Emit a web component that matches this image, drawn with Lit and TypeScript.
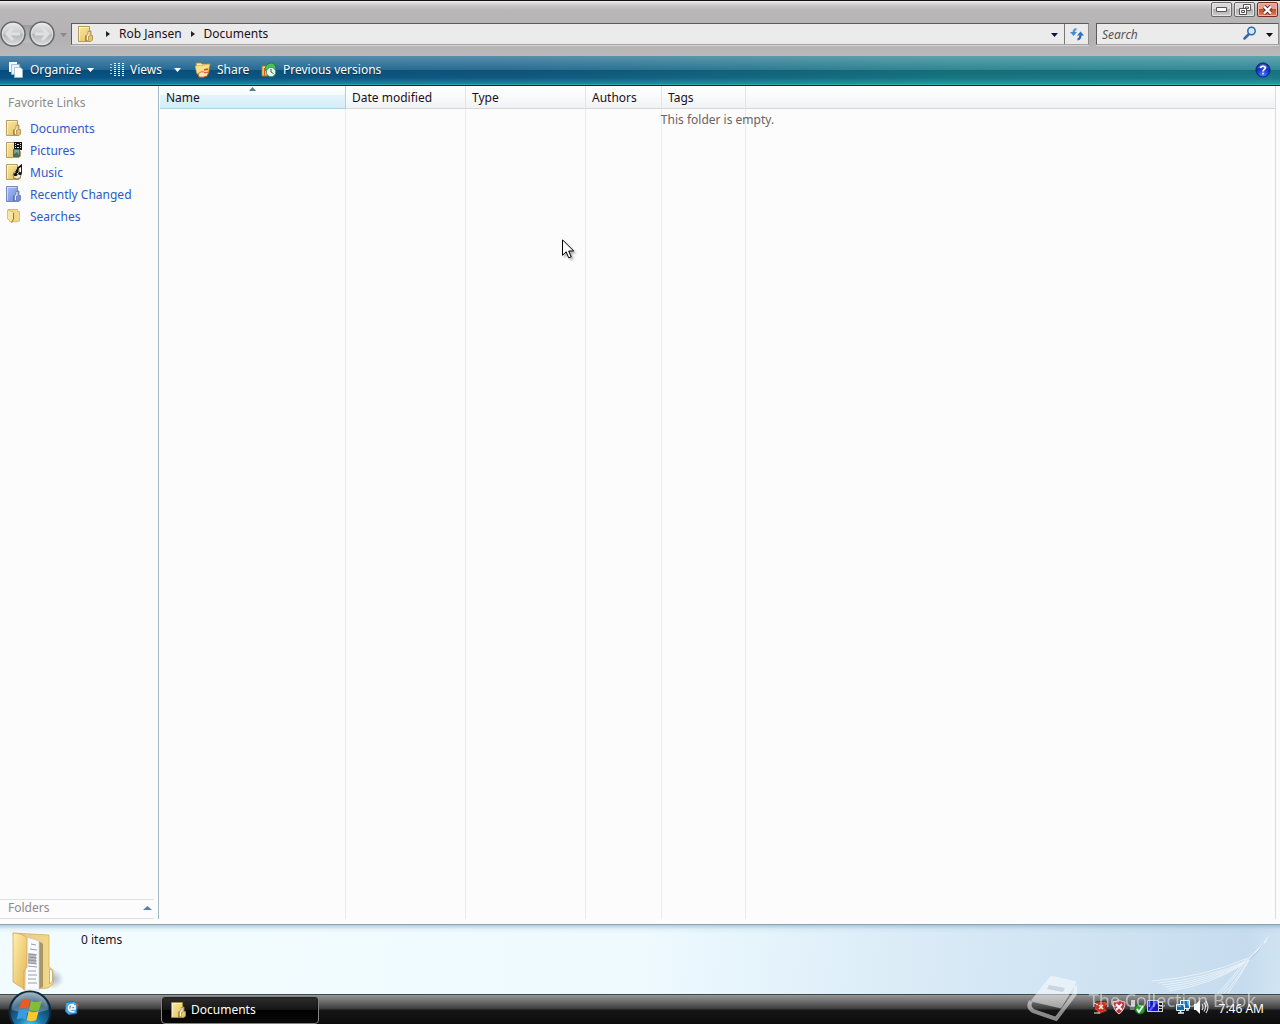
import { LitElement, html, css, svg, nothing } from "lit";
import { customElement, property } from "lit/decorators.js";

type FolderKind = "documents" | "pictures" | "music" | "recent" | "searches";

const LINKS: { label: string; kind: FolderKind }[] = [
  { label: "Documents", kind: "documents" },
  { label: "Pictures", kind: "pictures" },
  { label: "Music", kind: "music" },
  { label: "Recently Changed", kind: "recent" },
  { label: "Searches", kind: "searches" },
];

const caret = html`<svg class="caret" width="7" height="4" viewBox="0 0 7 4" aria-hidden="true"><path d="M0 0h7L3.500 4z" fill="currentColor"/></svg>`;
const chevron = html`<svg class="chevron" width="4" height="6" viewBox="0 0 4 6" aria-hidden="true"><path d="M0 0l4 3-4 3z" fill="#222"/></svg>`;

@customElement("folder-icon")
export class FolderIcon extends LitElement {
  static styles = css`
    :host { display: block; width: 16px; height: 16px; flex: none; }
    .icon { display: block; }
  `;

  @property() kind: FolderKind = "documents";

  private extra() {
    switch (this.kind) {
      case "pictures":
        return svg`<path d="M8 0h8v8H8z" fill="#111"/><path d="M9 1h1v1H9zM9 3h1v1H9zM9 5h1v1H9zM14 1h1v1h-1zM14 3h1v1h-1zM14 5h1v1h-1zM11 2h2v1h-2zM11 5h2v1h-2z" fill="#ddd"/><path d="M7.500 7.500h6v7h-6z" fill="#79a6a0" stroke="#55655d"/><path d="M8 12l3-2 2 3v1H8z" fill="#3b6f70"/>`;
      case "music":
        return svg`<circle cx="11" cy="11" r="4" fill="#eee9cf" stroke="#99895a"/><path d="M11 9l1-5 4-3v8" fill="none" stroke="#111" stroke-width="1.800"/><path d="M9 12l2-6" stroke="#111" stroke-width="1.500"/><ellipse cx="9.500" cy="10.500" rx="2" ry="1.600" fill="#111"/><ellipse cx="14" cy="9.500" rx="1.800" ry="1.500" fill="#111"/>`;
      default:
        return nothing;
    }
  }

  render() {
    const blue = this.kind === "recent";
    const light = blue ? "#a9c0f4" : "#fae9a4";
    const dark = blue ? "#6583d4" : "#e3bb57";
    const line = blue ? "#6579ad" : "#a78c4a";
    if (this.kind === "searches") {
      return html`<svg class="icon" width="16" height="16" viewBox="0 0 16 16" aria-hidden="true">
        <path d="M2 1.500h9.500v2h2v9.500l-5 1L3 11z" fill="#f3d78d" stroke="#d0b06a" stroke-width=".8"/>
        <path d="M1.500 2l6 2v7l-1 3.500-3-1v-1.500l-2-1z" fill="#fbe6a4" stroke="#d8b668" stroke-width=".8"/>
        <path d="M7.500 5v6l-2 3.500" stroke="#9b7832" fill="none"/>
      </svg>`;
    }
    return html`<svg class="icon" width="16" height="16" viewBox="0 0 16 16" aria-hidden="true">
      <defs><linearGradient id="f" x1="0" y1="0" x2="1" y2="1"><stop offset="0" stop-color=${light}/><stop offset="1" stop-color=${dark}/></linearGradient></defs>
      <path d="M.5.500h11v4.500h1.500v4.500h1.500v4.500l-1.500 1.500H.5z" fill="url(#f)" stroke=${line} stroke-width=".8"/>
      <path d="M1.500 14.500V1.500h9" fill="none" stroke="#fff" stroke-opacity=".5"/>
      <path d="M8 15v-5l2-1.500V5.500h2v4.500h-1.500v4.500z" fill=${blue ? "#e5ecfb" : "#fffbe8"} stroke=${line} stroke-width=".8"/>
      <path d="M8 9.500v5.500" stroke=${blue ? "#40558d" : "#7d6320"} stroke-width=".9"/>
      ${this.extra()}
    </svg>`;
  }
}

@customElement("window-frame")
export class WindowFrame extends LitElement {
  static styles = css`
    :host { display: block; background: linear-gradient(#111 0 1px, #f0eff0 1px, #cbc9c9 5px, #b9b7b7 10px, #b3b1b1 40px, #bbb9b9 56px); }
    button, input { font: inherit; color: inherit; margin: 0; padding: 0; border: 0; background: none; }
    .buttons { display: flex; justify-content: flex-end; gap: 2px; padding: 2px 2px 0; height: 16px; box-sizing: border-box; }
    .win { display: flex; align-items: center; justify-content: center; width: 21px; height: 15px; box-sizing: border-box; border: 1px solid #6a6868; border-radius: 2px; background: linear-gradient(#d9d8d8 0 50%, #b2b0b0 50%, #cdcbcb); box-shadow: inset 0 0 0 1px #e6e5e5; }
    .close { border-color: #7c2c1c; background: linear-gradient(#e6a08c 0 50%, #c94a2a 50%, #e0805c); box-shadow: inset 0 0 0 1px #efb7a5; }
    .row { display: flex; align-items: center; height: 40px; box-sizing: border-box; padding: 0 1px 4px 0; }
    .nav { display: flex; flex: none; align-items: center; width: 71px; height: 28px; background: linear-gradient(#9d9b9b, #bfbdbd) 14px center / 28px 18px no-repeat; }
    .round { flex: none; width: 26px; height: 26px; margin-right: 3px; }
    .recent { width: 10px; color: #8b8989; }
    .box { display: flex; align-items: center; height: 22px; box-sizing: border-box; background: #ecebeb; border: 1px solid; border-color: #5c5a5a #8e8c8c #a3a1a1 #5c5a5a; box-shadow: 0 1px #d6d4d4; }
    .address { flex: 1; padding-left: 6px; }
    .crumbs { display: flex; flex: 1; align-items: center; gap: 9px; padding-left: 12px; }
    .crumbs button { line-height: 20px; color: #1d1020; }
    .drop { width: 20px; height: 20px; color: #101040; }
    .refresh { display: flex; align-items: center; justify-content: center; width: 24px; height: 20px; border-left: 1px solid #777; }
    .search { width: 183px; margin-left: 7px; }
    .search input { flex: 1; min-width: 0; height: 20px; padding-left: 5px; font-style: italic; outline: none; }
    .search input::placeholder { color: #555; opacity: 1; }
    .find { display: flex; width: 14px; height: 16px; }
    .options { width: 18px; color: #111; margin-left: 3px; }
    svg { display: inline-block; vertical-align: middle; }
  `;

  private round(path: string) {
    return html`<svg width="26" height="26" viewBox="0 0 26 26" aria-hidden="true">
      <defs><linearGradient id="g" x1="0" y1="0" x2="0" y2="1"><stop offset="0" stop-color="#e9e9e9"/><stop offset=".48" stop-color="#c9cacb"/><stop offset=".52" stop-color="#b5b7b8"/><stop offset="1" stop-color="#dcdede"/></linearGradient></defs>
      <circle cx="13" cy="13" r="12" fill="url(#g)" stroke="#63676a" stroke-width="1.500"/>
      <circle cx="13" cy="13" r="10.500" fill="none" stroke="#f2f2f2" stroke-opacity=".6"/>
      <path d=${path} fill="none" stroke="#dfe1e1" stroke-width="3"/>
    </svg>`;
  }

  render() {
    return html`
      <div class="buttons">
        <button class="win" aria-label="Minimize"><svg width="11" height="5" viewBox="0 0 11 5"><path d="M.5.500h10v4H.5z" fill="#fff" stroke="#555"/></svg></button>
        <button class="win" aria-label="Restore"><svg width="12" height="11" viewBox="0 0 12 11"><path d="M4.500.500h7v6h-7zM6.500 3h3v1.500h-3z" fill="#fff" stroke="#555"/><path d="M.5 4.500h7v6h-7zM2.500 6.500h3v2h-3z" fill="#fff" stroke="#555"/></svg></button>
        <button class="win close" aria-label="Close"><svg width="11" height="10" viewBox="0 0 11 10"><path d="M2 1.500l7 7M9 1.500l-7 7" stroke="#54302a" stroke-width="4"/><path d="M2 1.500l7 7M9 1.500l-7 7" stroke="#fff" stroke-width="2.400"/></svg></button>
      </div>
      <div class="row">
        <div class="nav">
          <button class="round" aria-label="Back">${this.round("M20 13H8M13 7l-6 6 6 6")}</button>
          <button class="round" aria-label="Forward">${this.round("M6 13h12M13 7l6 6-6 6")}</button>
          <button class="recent" aria-label="Recent pages">${caret}</button>
        </div>
        <div class="box address">
          <folder-icon kind="documents"></folder-icon>
          <div class="crumbs">${chevron}<button>Rob Jansen</button>${chevron}<button>Documents</button></div>
          <button class="drop" aria-label="Previous locations">${caret}</button>
          <button class="refresh" aria-label="Refresh">
            <svg width="14" height="14" viewBox="0 0 14 14"><path d="M6.500 2Q3.500 2.500 3.500 6" fill="none" stroke="#4f9be0" stroke-width="2.200"/><path d="M0 5h7L3.500 9z" fill="#3f8cd6"/><path d="M7.500 12.500q3-.5 3-5" fill="none" stroke="#2b66b8" stroke-width="2.200"/><path d="M7 8.500h7l-3.500-4z" fill="#2f6fc0"/></svg>
          </button>
        </div>
        <div class="box search">
          <input type="text" placeholder="Search" aria-label="Search" />
          <button class="find" aria-label="Find"><svg width="14" height="14" viewBox="0 0 14 14"><path d="M1.500 12.500l5-5" stroke="#3a6aa2" stroke-width="2.500" stroke-linecap="round"/><circle cx="8.500" cy="5" r="3.700" fill="#cfeaf8" stroke="#2e67a8" stroke-width="1.500"/></svg></button>
          <button class="options" aria-label="Search options">${caret}</button>
        </div>
      </div>`;
  }
}

@customElement("command-bar")
export class CommandBar extends LitElement {
  static styles = css`
    :host { display: block; }
    .bar { display: flex; align-items: center; height: 30px; box-sizing: border-box; padding: 0 9px 2px 8px; color: #fff; border-bottom: 1px solid #06262c;
      background: linear-gradient(rgba(255,255,255,.3), rgba(255,255,255,.1) 48%, rgba(0,0,0,.1) 50%, rgba(0,0,0,.04) 75%, rgba(60,220,205,.3) 95%, rgba(90,230,220,.6)), linear-gradient(90deg, #07558a, #115c86 40%, #187a86 75%, #1b7d8c); }
    button { display: flex; align-items: center; gap: 6px; font: inherit; color: inherit; line-height: 20px; border: 0; padding: 0; margin: 0; background: none; white-space: nowrap; text-shadow: 0 1px 1px #06304a; }
    .organize { width: 102px; }
    .views { width: 64px; }
    .split { width: 21px; }
    .share { width: 66px; }
    .help { margin-left: auto; }
  `;

  render() {
    return html`<div class="bar" role="toolbar">
      <button class="organize"><svg width="16" height="16" viewBox="0 0 16 16"><path d="M1 0h8v10H1z" fill="#fff"/><path d="M3.500 2.500h8v10h-8z" fill="#e8f3fa" stroke="#8fb2c8" stroke-width=".8"/><path d="M6.500 5.500h6l2 2v8h-8z" fill="#fff" stroke="#9cb9ca" stroke-width=".8"/></svg>Organize${caret}</button>
      <button class="views"><svg width="14" height="14" viewBox="0 0 14 14"><path d="M0 1.500h2M0 4.500h2M0 7.500h2M0 10.500h2" stroke="#a8cfe2"/><path d="M4 .500h2M4 2.500h2M4 4.500h2M4 6.500h2M4 8.500h2M4 10.500h2M4 12.500h2M8 .500h2M8 2.500h2M8 4.500h2M8 6.500h2M8 8.500h2M8 10.500h2M8 12.500h2M12 .500h2M12 2.500h2M12 4.500h2M12 6.500h2M12 8.500h2M12 10.500h2M12 12.500h2" stroke="#fff"/></svg>Views</button>
      <button class="split" aria-label="Change view">${caret}</button>
      <button class="share"><svg width="16" height="16" viewBox="0 0 16 16"><path d="M1 1h5l1 1h7v8H2z" fill="#fff0b4" stroke="#b88420" stroke-width=".8"/><path d="M0 4l9-1 6-1-2 8-11 2z" fill="#fce08a" stroke="#d19a2c" stroke-width=".6"/><path d="M3 12q4-4 7-1l4-1-2 4q-4 2-8 1z" fill="#ffe3b4" stroke="#c25f20" stroke-width=".9"/><path d="M9 8l4-1" stroke="#e03c20" stroke-width="1.500"/></svg>Share</button>
      <button><svg width="16" height="16" viewBox="0 0 16 16"><path d="M1 4h5v10H1z" fill="#fbe38a" stroke="#a67a1c"/><path d="M3.500 6v8" stroke="#e05b20" stroke-width="1.500"/><path d="M4 7q1-6 7-6 4 1 4 7l-3-2q-4-2-7 3z" fill="#45c558" stroke="#127326" stroke-width=".7"/><circle cx="10" cy="10" r="4.700" fill="#e9f8ef" stroke="#4d976a"/><path d="M10 7v3l2.500 1.500" fill="none" stroke="#286d54"/></svg>Previous versions</button>
      <button class="help" aria-label="Help"><svg width="16" height="16" viewBox="0 0 17 17"><defs><radialGradient id="h" cx=".5" cy=".85" r=".8"><stop offset="0" stop-color="#4c7cf8"/><stop offset=".6" stop-color="#1331cb"/><stop offset="1" stop-color="#233c9f"/></radialGradient></defs><circle cx="8.500" cy="8.500" r="7.500" fill="url(#h)" stroke="#0a1c80"/><path d="M3 6q5.500-7 11 0-5 2-11 0z" fill="#fff" opacity=".25"/><path d="M6 6.500q0-2 2.500-2t2.500 2q0 1-1.500 1.700-1 .5-1 1.800M8.500 11.500v1.500" fill="none" stroke="#fff" stroke-width="1.700"/></svg></button>
    </div>`;
  }
}

@customElement("link-pane")
export class LinkPane extends LitElement {
  static styles = css`
    :host { display: flex; flex-direction: column; width: 159px; box-sizing: border-box; border-right: 1px solid #a3b8c6; }
    .title { margin: 0; padding: 8px 8px 5px; font: inherit; line-height: 18px; color: #8e8a8a; }
    .list { list-style: none; margin: 0; padding: 0; }
    .link { display: flex; align-items: center; gap: 8px; height: 22px; padding-left: 6px; color: #2b5bc2; text-decoration: none; white-space: nowrap; }
    .folders { display: flex; align-items: center; justify-content: space-between; margin: auto 4px 0 0; height: 20px; box-sizing: border-box; padding: 0 2px 3px 8px; font: inherit; color: #8e8a8a; background: none; border: solid #e2dfdf; border-width: 1px 0; }
  `;

  render() {
    return html`
      <h2 class="title">Favorite Links</h2>
      <ul class="list">
        ${LINKS.map((l) => html`<li><a class="link" href="#"><folder-icon kind=${l.kind}></folder-icon>${l.label}</a></li>`)}
      </ul>
      <button class="folders">Folders<svg width="9" height="4" viewBox="0 0 9 4"><path d="M0 4h9L4.500 0z" fill="#5c7db3"/></svg></button>`;
  }
}

@customElement("file-list")
export class FileList extends LitElement {
  static styles = css`
    :host { display: grid; flex: 1; margin: 0 4px 0 1px; border-right: 1px solid #dcdcdc; }
    .table { grid-area: 1 / 1; width: 100%; height: 100%; table-layout: fixed; border-collapse: separate; border-spacing: 0; }
    .name { width: 186px; }
    .date, .type { width: 120px; }
    .authors { width: 76px; }
    .tags { width: 84px; }
    th { position: relative; height: 23px; box-sizing: border-box; padding: 2px 0 0 6px; font-weight: normal; text-align: left; line-height: 20px; color: #1d1020; background: linear-gradient(#fff, #f9fafb 50%, #f1f2f4); border-right: 1px solid #e3e5e7; border-bottom: 1px solid #d6d8da; white-space: nowrap; }
    .sorted { background: linear-gradient(#fff 0 5%, #f4fbfe 40%, #e3f3fb 42%, #d5ecf8); border-color: #a9d2e4; }
    .mark { position: absolute; top: 1px; left: 48%; }
    td { padding: 0; height: 100%; border-right: 1px solid #ececee; }
    th:last-child, td:last-child { border-right: 0; }
    .empty { grid-area: 1 / 1; justify-self: center; align-self: start; margin: 25px 0 0; line-height: 18px; color: #6c6166; z-index: 1; }
  `;

  render() {
    return html`
      <table class="table">
        <colgroup><col class="name"><col class="date"><col class="type"><col class="authors"><col class="tags"><col></colgroup>
        <thead><tr>
          <th class="sorted" aria-sort="ascending">Name<svg class="mark" width="7" height="4" viewBox="0 0 7 4"><path d="M0 4h7L3.500 0z" fill="#4d8494"/></svg></th>
          <th>Date modified</th><th>Type</th><th>Authors</th><th>Tags</th><th></th>
        </tr></thead>
        <tbody><tr><td></td><td></td><td></td><td></td><td></td><td></td></tr></tbody>
      </table>
      <p class="empty">This folder is empty.</p>`;
  }
}

@customElement("details-pane")
export class DetailsPane extends LitElement {
  static styles = css`
    :host { display: block; }
    .pane { display: flex; position: relative; height: 70px; box-sizing: border-box; overflow: hidden; border-top: 1px solid #8aa5b6;
      background: linear-gradient(rgba(130,165,190,.55), rgba(170,200,220,.2) 4px, transparent 8px), linear-gradient(95deg, #f2fcff 20%, #eefaff 50%, #d6e8f5 76%, #c6dcee 97%, #d0e4f2); }
    .big { flex: none; margin: 7px 0 0 12px; }
    .count { margin: 6px 0 0 17px; line-height: 18px; color: #1d1020; }
    .wisps { position: absolute; right: 8px; top: 8px; }
  `;

  render() {
    return html`<div class="pane">
      <svg class="big" width="52" height="62" viewBox="0 0 52 62" aria-hidden="true">
        <defs>
          <linearGradient id="a" x1="0" y1="0" x2="1" y2="1"><stop offset="0" stop-color="#fff0ae"/><stop offset="1" stop-color="#e3b452"/></linearGradient>
          <linearGradient id="b" x1="0" y1="0" x2="1" y2="0"><stop offset="0" stop-color="#e8c878"/><stop offset="1" stop-color="#f3d88e"/></linearGradient>
          <radialGradient id="s"><stop offset="0" stop-color="#71808c" stop-opacity=".6"/><stop offset="1" stop-color="#71808c" stop-opacity="0"/></radialGradient>
        </defs>
        <ellipse cx="40" cy="47" rx="12" ry="10" fill="url(#s)"/>
        <path d="M1 1l36 2v32l4 3v14l-5 4-24 2z" fill="url(#b)" stroke="#cfa653" stroke-width=".7"/>
        <path d="M37.500 37q3 0 3 3v9l-3 3z" fill="#fff" stroke="#c09a4c" stroke-width=".7"/>
        <path d="M27 9l4 3v43l-5 2z" fill="#8f8258" opacity=".75"/>
        <path d="M14 5l13 4v49H13z" fill="#fafbfc" stroke="#c8ccd0" stroke-width=".7"/>
        <path d="M19 12l5 1M18 17l7 1M17 22l8 1M17 25l8 1M16 28l9 1M16 31l9 1M16 34l9 1M16 39l8 0M16 43l9 0M16 47l8 0M16 51l9 0" stroke="#9aa0a7" stroke-width="1.200"/>
        <path d="M16 21l8 1v10l-8-1z" fill="#8a9097" opacity=".6"/>
        <path d="M1 1q9 0 14 5v29l-3 4v18L1 50z" fill="url(#a)" stroke="#d2a048" stroke-width=".7"/>
      </svg>
      <p class="count">0 items</p>
      <svg class="wisps" width="122" height="62" viewBox="0 0 122 62" fill="none" stroke="#fff" aria-hidden="true">
        <g stroke-width=".8" opacity=".7">
          <path d="M2 48Q54 44 98 25"/><path d="M8 50Q56 46 96 28"/><path d="M12 52Q56 48 95 29"/><path d="M15 54Q58 49 94 30"/><path d="M17 56Q58 51 93 31"/><path d="M19 58Q60 52 92 32"/>
          <path d="M68 60Q82 46 96 26"/><path d="M71 60Q84 46 98 26"/><path d="M74 60Q88 46 100 24"/><path d="M78 60Q90 44 102 22"/>
        </g>
        <path d="M98 25q12-10 21-23-3 12-21 23z" fill="#fff" opacity=".6" stroke="none"/>
        <path d="M99 27q9-7 15-17" stroke="#8fb4d0" stroke-width=".8" opacity=".7"/>
      </svg>
    </div>`;
  }
}

@customElement("task-bar")
export class TaskBar extends LitElement {
  static styles = css`
    :host { display: block; position: relative; color: #fff; }
    .bar { display: flex; align-items: center; height: 30px; box-sizing: border-box; padding-right: 16px; border-top: 1px solid #3d4a4c; background: linear-gradient(#959595, #5e5e5e 30%, #3a3a3a 48%, #161616 52%, #0c0c0c); }
    button { font: inherit; color: inherit; border: 0; padding: 0; margin: 0; background: none; }
    .start { position: absolute; left: 8px; bottom: -10px; height: 44px; }
    .launch { margin: 0 0 4px 64px; height: 16px; }
    .task { display: flex; align-items: center; gap: 4px; width: 158px; height: 28px; margin-left: 81px; padding-left: 9px; box-sizing: border-box; border: 1px solid #858585; border-radius: 4px; background: linear-gradient(#2e2e2e, #161616 48%, #000 50%, #0a0a0a); box-shadow: inset 0 0 2px #000; }
    .tray { display: flex; align-items: center; gap: 2px; margin-left: auto; padding-bottom: 6px; }
    .tray svg { display: block; }
    .net { margin-left: 10px; }
    .clock { margin-left: 8px; line-height: 18px; padding-top: 4px; }
    .brand { position: absolute; right: 24px; bottom: 0; display: flex; align-items: center; gap: 12px; color: #fff; opacity: .5; font-size: 18px; line-height: 24px; white-space: nowrap; pointer-events: none; }
    .brand span { padding-bottom: 1px; }
    .start svg, .launch svg { display: block; }
  `;

  render() {
    return html`
      <div class="bar">
        <button class="start" aria-label="Start">
          <svg width="44" height="44" viewBox="0 0 44 44">
            <defs><radialGradient id="o" cx=".5" cy=".9" r=".9"><stop offset="0" stop-color="#5fe0f5"/><stop offset=".35" stop-color="#1a79b0"/><stop offset=".7" stop-color="#174467"/><stop offset="1" stop-color="#8fa9ba"/></radialGradient></defs>
            <circle cx="22" cy="22" r="20.500" fill="url(#o)" stroke="#0c2a3c" stroke-width="2"/>
            <path d="M4 20a18 18 0 0 1 36 0Q22 26 4 20z" fill="#fff" opacity=".25"/>
            <path d="M14 10q4-2 8 0l-2 9q-4-2-9 0z" fill="#ea5a24"/>
            <path d="M23 10.500q5 3 11 0l-3 9.500q-5 2-10 0z" fill="#84bd35"/>
            <path d="M10.700 20.500q4.500-2 9 0l-2 9q-4-2-9 0z" fill="#3b9be2"/>
            <path d="M20.700 21q5 2.500 10 0l-2.500 9q-5 2.500-9.500 0z" fill="#fbc72c"/>
          </svg>
        </button>
        <button class="launch" aria-label="Show desktop"><svg width="16" height="16" viewBox="0 0 16 16"><path d="M1.500 2.500l9-1 3 3-1 9-8 1-3-3z" fill="#4aa5e0" stroke="#1c6cae"/><path d="M10 4.500Q4 4 4.500 8.500q1 4 6 3M7 9h4V6H8z" fill="none" stroke="#fff" stroke-width="1.500"/><path d="M12 3l3 2-2 2z" fill="#e24c24"/></svg></button>
        <button class="task"><folder-icon kind="documents"></folder-icon>Documents</button>
        <div class="tray">
          <svg width="16" height="16" viewBox="0 0 16 16"><path d="M3 3l10-1 2 3-3 3 2 4-8 3-3-4H1z" fill="#b8553c" stroke="#5a1c12"/><circle cx="8" cy="8" r="4.500" fill="#d82414"/><path d="M6 6l4 4M10 6l-4 4" stroke="#fff" stroke-width="1.500"/><path d="M1 4l4 2M1 14h6" stroke="#eee"/></svg>
          <svg width="16" height="16" viewBox="0 0 16 16"><path d="M8 1q3 2 6 2 0 8-6 12Q2 11 2 3q3 0 6-2z" fill="#c43240" stroke="#f0c9cc"/><path d="M5 5l6 6M11 5l-6 6" stroke="#fff" stroke-width="1.800"/></svg>
          <svg width="16" height="16" viewBox="0 0 16 16"><path d="M2 1h4v7H2z" fill="#cfcfcf"/><path d="M1 7h8v4H1z" fill="#767676"/><circle cx="11" cy="10" r="5" fill="#28a32c" stroke="#14651a"/><path d="M8 10l2 3 4-6" fill="none" stroke="#fff" stroke-width="1.800"/></svg>
          <svg width="16" height="16" viewBox="0 0 16 16"><path d="M.5 1.500h11v11H.5z" fill="#1718c4" stroke="#c8c8dd"/><path d="M1 12L9 2h2L4 12z" fill="#5360ee"/><path d="M11 3h5v10h-5z" fill="#ccc"/><path d="M12 4h3v2h-3zM12 7h3v2h-3zM12 10h3v2h-3z" fill="#111"/></svg>
          <svg class="net" width="16" height="16" viewBox="0 0 16 16"><path d="M5.500 1.500h9v8h-9z" fill="#1677bd" stroke="#e8f5fb"/><path d="M1.500 5.500h8v6h-8z" fill="#1267a9" stroke="#e8f5fb"/><path d="M3 14h6M5.500 12v2M11 11h3" stroke="#e8f5fb" stroke-width="1.500"/></svg>
          <svg width="16" height="16" viewBox="0 0 16 16"><path d="M1 5h2l4-4v14l-4-4H1z" fill="#fff"/><path d="M9 5q2 3 0 6M11 3.500q3 4.500 0 9M13 2q4 6 0 12" fill="none" stroke="#dce8ea" stroke-width="1.100"/></svg>
          <span class="clock">7:46 AM</span>
        </div>
      </div>
      <div class="brand">
        <svg width="50" height="48" viewBox="0 0 50 48" aria-hidden="true"><path d="M22 2q1-2 3-2l23 5q2 0 1 2L35 31q-1 2-3 1L6 26q-3-1-1-3z" fill="#fff"/><path d="M22 9l16 3-2 4-16-3z" fill="#8b9297" opacity=".5"/><path d="M4 25q-4 6 2 10l23 8 18-24q3-4 1-9" fill="none" stroke="#fff" stroke-width="4"/></svg>
        <span>The Collection Book</span>
      </div>`;
  }
}

@customElement("app-root")
export class AppRoot extends LitElement {
  static styles = css`
    :host { display: flex; flex-direction: column; position: relative; min-height: 100vh; overflow: hidden; font: 12px "Noto Sans", "Open Sans", sans-serif; background: #fcfcfc; }
    .content { display: flex; flex: 1; margin-bottom: 5px; }
    .pointer { position: absolute; left: 562px; top: 239px; filter: drop-shadow(2px 2px 1px rgba(0,0,0,.3)); pointer-events: none; }
  `;

  render() {
    return html`
      <window-frame></window-frame>
      <command-bar></command-bar>
      <main class="content"><link-pane></link-pane><file-list></file-list></main>
      <details-pane></details-pane>
      <task-bar></task-bar>
      <svg class="pointer" width="13" height="20" viewBox="0 0 13 20" aria-hidden="true"><path d="M.5.800v15.500l3.700-3.500 2.500 6 2.500-1-2.500-5.800h5z" fill="#fff" stroke="#000"/></svg>`;
  }
}
